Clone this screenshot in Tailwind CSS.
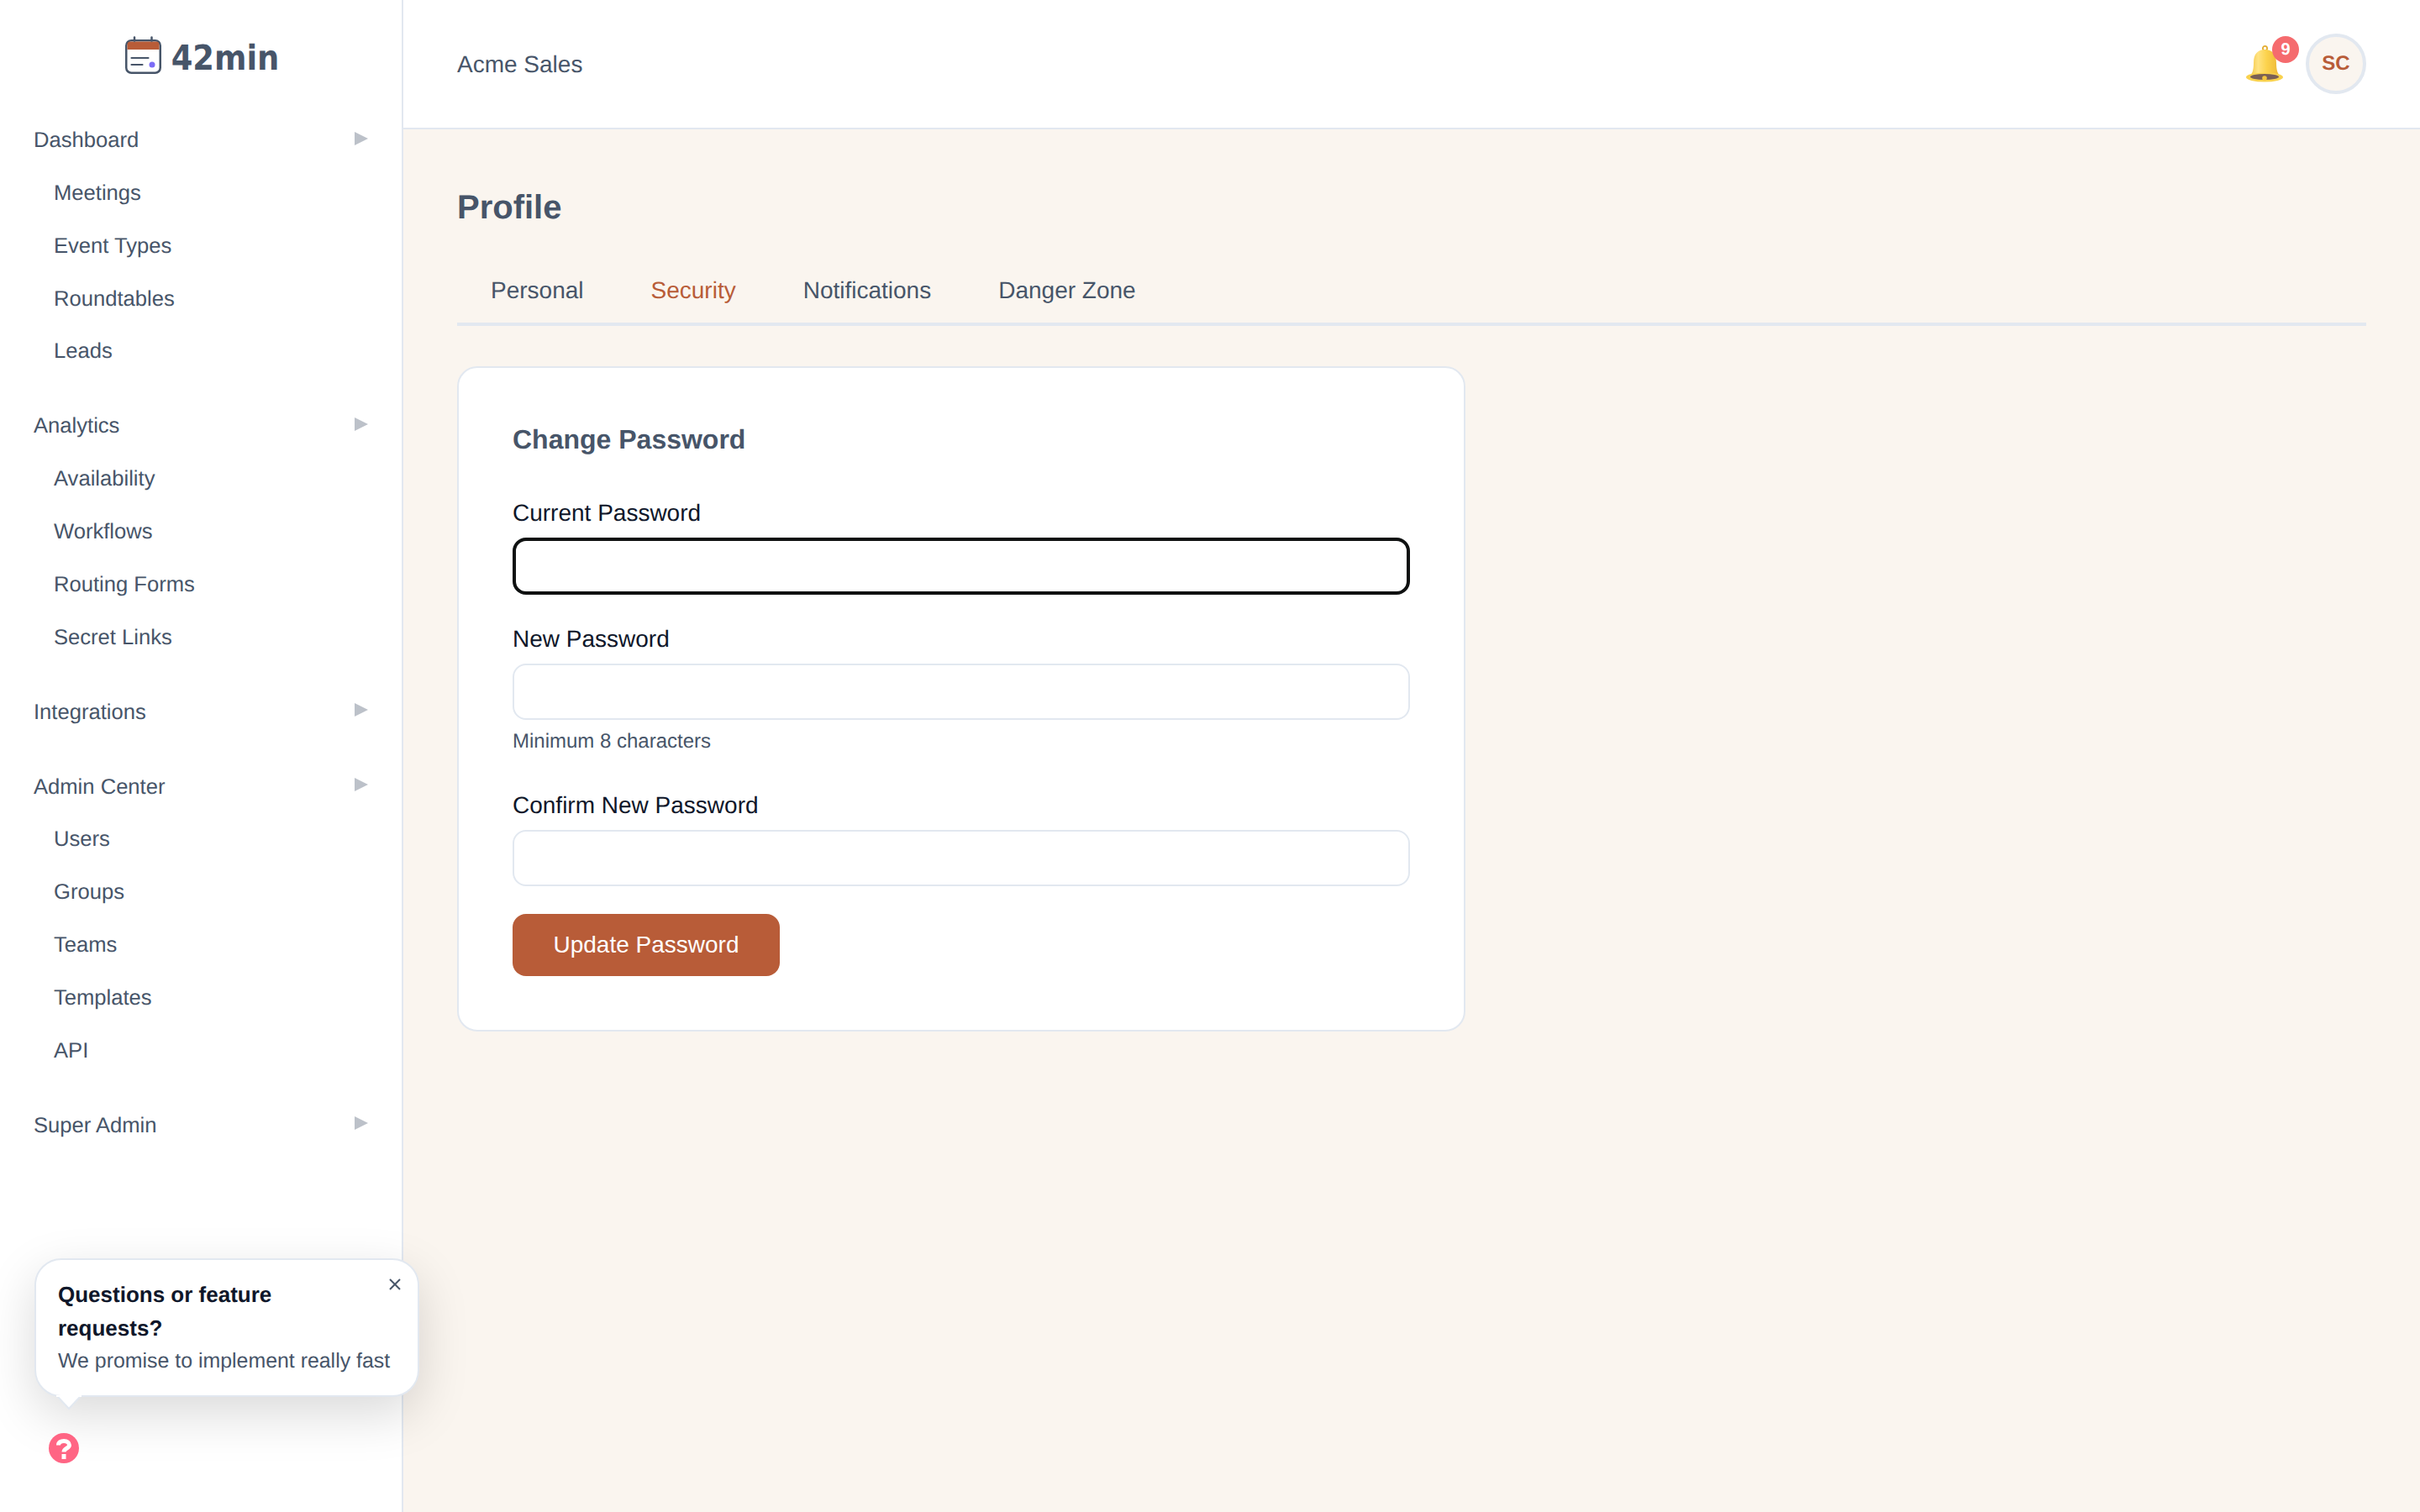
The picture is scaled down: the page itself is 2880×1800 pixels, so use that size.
<!DOCTYPE html>
<html lang="en">
  <head>
    <meta charset="UTF-8" />
    <meta name="viewport" content="width=device-width, initial-scale=1.0" />
    <title>Profile - 42min</title>
    <script src="https://cdn.jsdelivr.net/npm/@tailwindcss/browser@4"></script>
  </head>
  <body class="bg-[#faf5ef] font-['Liberation_Sans',Arial,sans-serif] text-[#475569] [text-rendering:geometricPrecision]">
    <div class="flex h-[1800px] w-[2880px] overflow-hidden">
      <!-- sidebar -->
      <aside class="relative z-10 flex h-full w-[480px] shrink-0 flex-col border-r-2 border-[#e2e8f0] bg-white">
        <div class="flex h-[136px] items-start justify-center pt-[40px] pl-[3px]">
          <svg class="mt-[3px] h-[46px] w-[43px]" viewBox="0 0 43 46" fill="none">
            <rect x="1.250" y="5.250" width="40.500" height="38.500" rx="6" fill="#fff" stroke="#475569" stroke-width="2.500" />
            <path d="M2.500 16V10a3.500 3.500 0 0 1 3.500-3.500h31a3.500 3.500 0 0 1 3.500 3.500v6z" fill="#b85c38" />
            <path d="M11 1.500v4M31.500 1.500v4" stroke="#475569" stroke-width="2.500" stroke-linecap="round" />
            <path d="M7.500 26h20M7.500 34h13" stroke="#475569" stroke-width="2.200" stroke-linecap="round" />
            <circle cx="32" cy="34" r="3.500" fill="#7c6cf6" />
          </svg>
          <span class="ml-[12px] font-['DejaVu_Sans_Condensed','DejaVu_Sans',sans-serif] text-[41px] leading-[58px] font-bold">42min</span>
        </div>

        <nav class="text-[25.6px]">
          <div class="mb-[26.200px]">
            <div class="flex h-[62.8px] items-center justify-between pr-[40px] pl-[40px]">
              <span>Dashboard</span>
              <svg class="mb-[5px] h-[16px] w-[16px]" viewBox="0 0 16 16"><path d="M0 0l16 8-16 8z" fill="#bcc1c9" /></svg>
            </div>
            <div class="flex h-[62.8px] items-center pl-[64px]">Meetings</div>
            <div class="flex h-[62.8px] items-center pl-[64px]">Event Types</div>
            <div class="flex h-[62.8px] items-center pl-[64px]">Roundtables</div>
            <div class="flex h-[62.8px] items-center pl-[64px]">Leads</div>
          </div>
          <div class="mb-[26.200px]">
            <div class="flex h-[62.8px] items-center justify-between pr-[40px] pl-[40px]">
              <span>Analytics</span>
              <svg class="mb-[5px] h-[16px] w-[16px]" viewBox="0 0 16 16"><path d="M0 0l16 8-16 8z" fill="#bcc1c9" /></svg>
            </div>
            <div class="flex h-[62.8px] items-center pl-[64px]">Availability</div>
            <div class="flex h-[62.8px] items-center pl-[64px]">Workflows</div>
            <div class="flex h-[62.8px] items-center pl-[64px]">Routing Forms</div>
            <div class="flex h-[62.8px] items-center pl-[64px]">Secret Links</div>
          </div>
          <div class="mb-[26.200px]">
            <div class="flex h-[62.8px] items-center justify-between pr-[40px] pl-[40px]">
              <span>Integrations</span>
              <svg class="mb-[5px] h-[16px] w-[16px]" viewBox="0 0 16 16"><path d="M0 0l16 8-16 8z" fill="#bcc1c9" /></svg>
            </div>
          </div>
          <div class="mb-[26.200px]">
            <div class="flex h-[62.8px] items-center justify-between pr-[40px] pl-[40px]">
              <span>Admin Center</span>
              <svg class="mb-[5px] h-[16px] w-[16px]" viewBox="0 0 16 16"><path d="M0 0l16 8-16 8z" fill="#bcc1c9" /></svg>
            </div>
            <div class="flex h-[62.8px] items-center pl-[64px]">Users</div>
            <div class="flex h-[62.8px] items-center pl-[64px]">Groups</div>
            <div class="flex h-[62.8px] items-center pl-[64px]">Teams</div>
            <div class="flex h-[62.8px] items-center pl-[64px]">Templates</div>
            <div class="flex h-[62.8px] items-center pl-[64px]">API</div>
          </div>
          <div class="flex h-[62.8px] items-center justify-between pr-[40px] pl-[40px]">
            <span>Super Admin</span>
            <svg class="mb-[5px] h-[16px] w-[16px]" viewBox="0 0 16 16"><path d="M0 0l16 8-16 8z" fill="#bcc1c9" /></svg>
          </div>
        </nav>

        <!-- feedback popup -->
        <div class="absolute top-[1498px] left-[41px] h-[165px] w-[458px] rounded-[32px] border-2 border-[#e2e8f0] bg-white pt-[21px] pl-[26px] shadow-[0_20px_60px_rgba(0,0,0,0.15)]">
          <p class="w-[340px] text-[26px] leading-[40px] font-bold text-[#0f172a]">Questions or feature requests?</p>
          <p class="text-[24.900px] leading-[38px]">We promise to implement really fast</p>
          <svg class="absolute top-[22px] right-[20px] h-[14px] w-[14px]" viewBox="0 0 14 14"><path d="M1 1l12 12M13 1L1 13" stroke="#475569" stroke-width="2" /></svg>
          <svg class="absolute top-[161px] left-[24px] h-[18px] w-[30px]" viewBox="0 0 30 18"><path d="M1 1l14 15L29 1" fill="#fff" stroke="#e2e8f0" stroke-width="2" /><path d="M0 0h30v2H0z" fill="#fff" /></svg>
        </div>
        <svg class="absolute top-[1706px] left-[58px] h-[36px] w-[36px]" viewBox="0 0 36 36">
          <circle cx="18" cy="18" r="18" fill="#ff6584" />
          <path d="M11.500 14.500C11.500 11 14.500 9.500 18 9.500c4 0 6.500 2 6.500 5 0 3.500-6.500 4-6.500 8" fill="none" stroke="#fff" stroke-width="5" />
          <rect x="15.500" y="25" width="5" height="6" fill="#fff" />
        </svg>
      </aside>

      <div class="flex min-w-0 flex-1 flex-col">
        <!-- top bar -->
        <header class="flex h-[154px] shrink-0 items-center justify-between border-b-2 border-[#e2e8f0] bg-white pr-[64px] pl-[64px]">
          <span class="pt-[2px] text-[28px]">Acme Sales</span>
          <div class="flex items-center">
            <div class="relative mr-[27px] h-[44px] w-[44px]">
              <svg class="h-[44px] w-[44px]" viewBox="0 0 44 44">
                <defs>
                  <linearGradient id="bell" x1="0" y1="0" x2="1" y2="0">
                    <stop offset="0" stop-color="#f3c33f" />
                    <stop offset="0.28" stop-color="#ffe382" />
                    <stop offset="0.55" stop-color="#fcd34d" />
                    <stop offset="1" stop-color="#ebb434" />
                  </linearGradient>
                </defs>
                <circle cx="22.500" cy="3.500" r="2.600" fill="none" stroke="#e3ad33" stroke-width="1.800" />
                <path d="M4 37c3.500-3 5-8 5-16C9 10 14 5 22.500 5S36 10 36 21c0 8 1.500 13 5 16z" fill="url(#bell)" />
                <ellipse cx="22" cy="38" rx="22" ry="5.500" fill="#f9d24f" />
                <ellipse cx="22" cy="37.500" rx="17" ry="3.500" fill="#7a5f55" />
                <circle cx="22" cy="39" r="2.800" fill="#f4c53f" />
              </svg>
              <span class="absolute top-[-11px] left-[31px] flex h-[32px] w-[32px] items-center justify-center rounded-full bg-[#f56b6e] text-[20px] font-bold text-white">9</span>
            </div>
            <div class="flex h-[72px] w-[72px] items-center justify-center rounded-full border-4 border-[#e2e8f0] bg-[#faf5ef] text-[24px] font-bold text-[#b85c38]">SC</div>
          </div>
        </header>

        <main class="flex-1 px-[64px]">
          <h1 class="mt-[69px] text-[40px] leading-[48px] font-bold">Profile</h1>
          <div class="mt-[43px] flex h-[74px] items-center border-b-4 border-[#e2e8f0] pb-[6px] text-[28px]">
            <span class="px-[40px]">Personal</span>
            <span class="px-[40px] text-[#b85c38]">Security</span>
            <span class="px-[40px]">Notifications</span>
            <span class="px-[40px]">Danger Zone</span>
          </div>

          <section class="mt-[48px] w-[1200px] rounded-[24px] border-2 border-[#e2e8f0] bg-white p-[64px]">
            <h2 class="mt-[-1px] text-[32px] leading-[44px] font-bold">Change Password</h2>

            <label class="mt-[49px] block text-[28px] leading-[34px] text-[#0f172a]">Current Password</label>
            <div class="mt-[12px] h-[68px] rounded-[16px] border-4 border-[#0f1111] bg-white"></div>

            <label class="mt-[36px] block text-[28px] leading-[34px] text-[#0f172a]">New Password</label>
            <div class="mt-[12px] h-[67px] rounded-[16px] border-2 border-[#e2e8f0] bg-white"></div>
            <p class="mt-[12px] text-[24px] leading-[28px]">Minimum 8 characters</p>

            <label class="mt-[45px] block text-[28px] leading-[34px] text-[#0f172a]">Confirm New Password</label>
            <div class="mt-[12px] h-[67px] rounded-[16px] border-2 border-[#e2e8f0] bg-white"></div>

            <button class="mt-[33px] block h-[74px] w-[318px] rounded-[16px] bg-[#b85c38] text-[28px] text-white">Update Password</button>
          </section>
        </main>
      </div>
    </div>
  </body>
</html>
